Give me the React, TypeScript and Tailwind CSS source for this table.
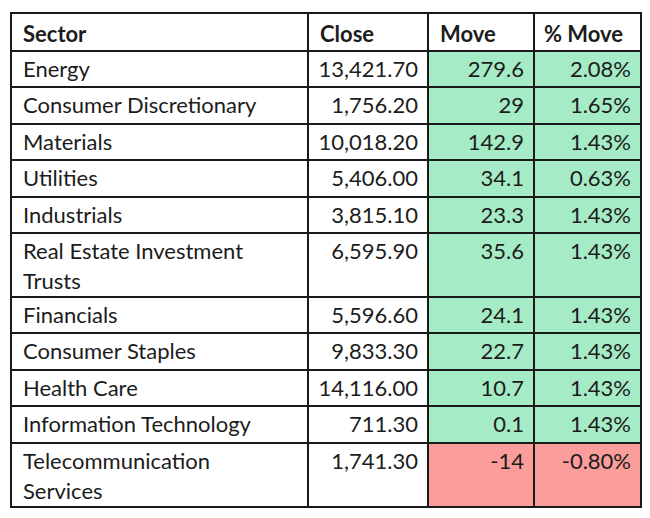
const rows: { sector: string; close: string; move: string; pct: string; up: boolean; tall?: boolean }[] = [
  { sector: "Energy", close: "13,421.70", move: "279.6", pct: "2.08%", up: true },
  { sector: "Consumer Discretionary", close: "1,756.20", move: "29", pct: "1.65%", up: true },
  { sector: "Materials", close: "10,018.20", move: "142.9", pct: "1.43%", up: true },
  { sector: "Utilities", close: "5,406.00", move: "34.1", pct: "0.63%", up: true },
  { sector: "Industrials", close: "3,815.10", move: "23.3", pct: "1.43%", up: true },
  { sector: "Real Estate Investment Trusts", close: "6,595.90", move: "35.6", pct: "1.43%", up: true, tall: true },
  { sector: "Financials", close: "5,596.60", move: "24.1", pct: "1.43%", up: true },
  { sector: "Consumer Staples", close: "9,833.30", move: "22.7", pct: "1.43%", up: true },
  { sector: "Health Care", close: "14,116.00", move: "10.7", pct: "1.43%", up: true },
  { sector: "Information Technology", close: "711.30", move: "0.1", pct: "1.43%", up: true },
  { sector: "Telecommunication Services", close: "1,741.30", move: "-14", pct: "-0.80%", up: false, tall: true },
];

export default function App() {
  return (
    <div className="h-[518px] w-[650px] bg-white pl-[10px] pt-[12px] text-[#1c1c1c]" style={{ fontFamily: "Lato, 'Liberation Sans', sans-serif" }}>
      <table className="w-[630px] table-fixed border-collapse border-2 border-[#1a1a1a] text-[22px] leading-[30px]">
        <colgroup>
          <col className="w-[297px]" />
          <col className="w-[120px]" />
          <col className="w-[106px]" />
          <col className="w-[107px]" />
        </colgroup>
        <thead>
          <tr className="h-[38px] font-bold">
            <th className="border-2 border-[#1a1a1a] px-[11px] pt-[3px] text-left align-middle">Sector</th>
            <th className="border-2 border-[#1a1a1a] px-[11px] pt-[3px] text-left align-middle">Close</th>
            <th className="border-2 border-[#1a1a1a] px-[11px] pt-[3px] text-left align-middle">Move</th>
            <th className="border-2 border-[#1a1a1a] px-[9px] pt-[3px] text-left align-middle">% Move</th>
          </tr>
        </thead>
        <tbody>
          {rows.map((r) => {
            const fill = r.up ? "bg-[#a5ebc5]" : "bg-[#fb9d9b]";
            return (
              <tr key={r.sector} className={r.tall ? "h-[62px]" : "h-[36.4px]"}>
                <td className={`border-2 border-[#1a1a1a] px-[11px] pt-[2px] align-top ${r.tall ? "pr-[30px]" : ""}`}>{r.sector}</td>
                <td className="border-2 border-[#1a1a1a] px-[9px] pt-[2px] text-right align-top">{r.close}</td>
                <td className={`border-2 border-[#1a1a1a] px-[9px] pt-[2px] text-right align-top ${fill}`}>{r.move}</td>
                <td className={`border-2 border-[#1a1a1a] px-[9px] pt-[2px] text-right align-top ${fill}`}>{r.pct}</td>
              </tr>
            );
          })}
        </tbody>
      </table>
    </div>
  );
}
